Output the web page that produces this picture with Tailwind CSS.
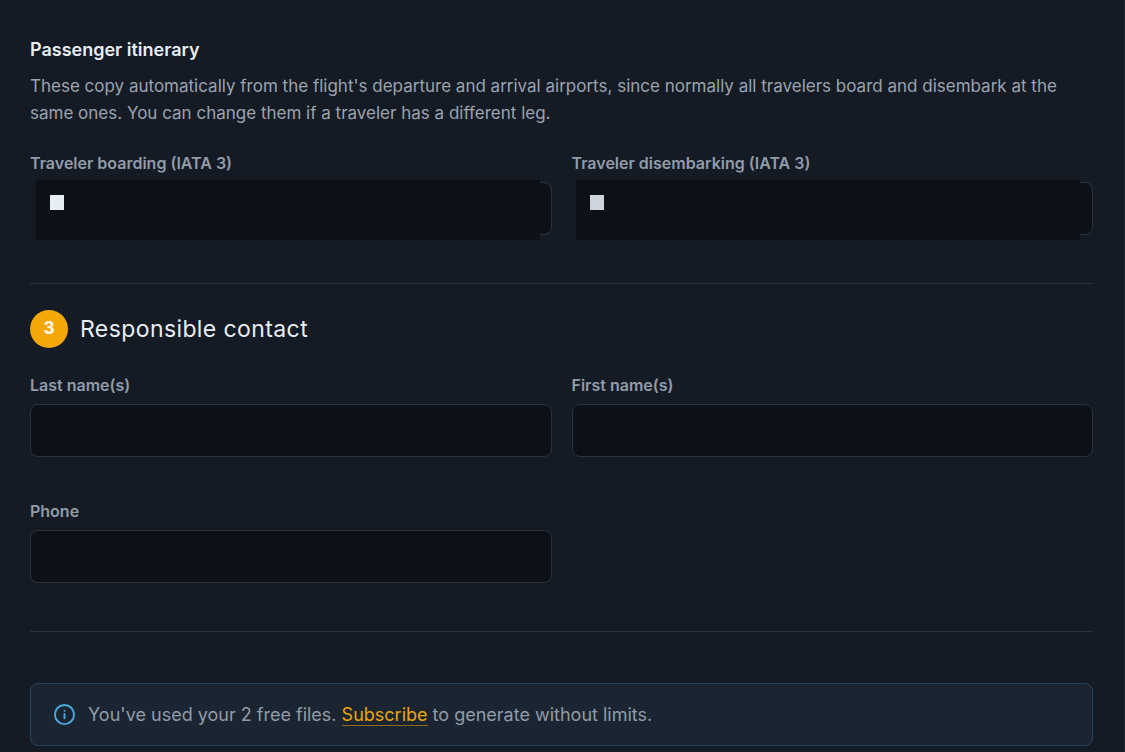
<!DOCTYPE html>
<html lang="en">
<head>
    <meta charset="UTF-8">
    <script src="https://cdn.jsdelivr.net/npm/@tailwindcss/browser@4"></script>
    <title>Responsible contact</title>
</head>
<body class="h-[752px] overflow-hidden bg-[#141b25] font-['Inter',sans-serif]">
    <div class="pl-[30px] pr-[31px] pt-[38px] border-r border-[#1e2631] h-full">

        <!-- Passenger itinerary -->
        <h3 class="text-[18px] leading-[24px] font-semibold text-[#e8edf3]">Passenger itinerary</h3>
        <p class="mt-[11px] text-[17px] leading-[27px] text-[#9ca3af]">These copy automatically from the flight's departure and arrival airports, since normally all travelers board and disembark at the same ones. You can change them if a traveler has a different leg.</p>

        <div class="mt-[25px] grid grid-cols-2 gap-x-[20px]">
            <div>
                <label class="block text-[16px] leading-[22px] font-semibold text-[#929ca9]">Traveler boarding (IATA 3)</label>
                <div class="relative mt-[8px] h-[53px]">
                    <div class="ml-[6px] h-full rounded-r-lg border border-l-0 border-[#2a323e] bg-[#0d1117]"></div>
                    <div class="absolute left-[6px] top-[-2px] w-[504px] h-[60px] bg-[#0d1117]"></div>
                    <div class="absolute left-[20px] top-[13px] w-[14px] h-[15px] bg-[#e6edf5]"></div>
                </div>
            </div>
            <div>
                <label class="block text-[16px] leading-[22px] font-semibold text-[#929ca9]">Traveler disembarking (IATA 3)</label>
                <div class="relative mt-[8px] h-[53px]">
                    <div class="ml-[4px] h-full rounded-r-lg border border-l-0 border-[#2a323e] bg-[#0d1117]"></div>
                    <div class="absolute left-[4px] top-[-2px] w-[504px] h-[60px] bg-[#0d1117]"></div>
                    <div class="absolute left-[18px] top-[13px] w-[14px] h-[15px] bg-[#cdd4dd]"></div>
                </div>
            </div>
        </div>

        <hr class="mt-[48px] border-t border-[#2a313c]">

        <!-- Section 3 -->
        <div class="mt-[26px] flex items-center gap-[12px]">
            <span class="w-[38px] h-[38px] rounded-full bg-[#f3a808] flex items-center justify-center text-[17px] font-extrabold text-[#fbf3e0]">3</span>
            <h2 class="text-[23px] leading-[38px] text-[#e8edf3] tracking-[0.4px]">Responsible contact</h2>
        </div>

        <div class="mt-[26px] grid grid-cols-2 gap-x-[20px] gap-y-[43px]">
            <div>
                <label class="block text-[16px] leading-[22px] font-semibold text-[#929ca9]">Last name(s)</label>
                <input class="mt-[8px] block w-full h-[53px] rounded-lg border border-[#2a323e] bg-[#0d1117]">
            </div>
            <div>
                <label class="block text-[16px] leading-[22px] font-semibold text-[#929ca9]">First name(s)</label>
                <input class="mt-[8px] block w-full h-[53px] rounded-lg border border-[#2a323e] bg-[#0d1117]">
            </div>
            <div>
                <label class="block text-[16px] leading-[22px] font-semibold text-[#929ca9]">Phone</label>
                <input class="mt-[8px] block w-full h-[53px] rounded-lg border border-[#2a323e] bg-[#0d1117]">
            </div>
        </div>

        <hr class="mt-[48px] border-t border-[#2a313c]">

        <!-- Free files notice -->
        <div class="mt-[51px] h-[63px] flex items-center gap-[12px] pl-[22px] rounded-lg border border-[#27415a] bg-[#1b2531] text-[18px] text-[#929ba8]">
            <svg class="w-[23px] h-[23px] text-[#4aa8dc]" viewBox="0 0 24 24" fill="none" stroke="currentColor" stroke-width="2" stroke-linecap="round">
                <circle cx="12" cy="12" r="10"></circle>
                <path d="M12 16v-4.5"></path>
                <path d="M12 8h.01"></path>
            </svg>
            <span>You've used your 2 free files. <a class="text-[#eba40c] border-b border-[#8f6a17]">Subscribe</a> to generate without limits.</span>
        </div>
    </div>
</body>
</html>
